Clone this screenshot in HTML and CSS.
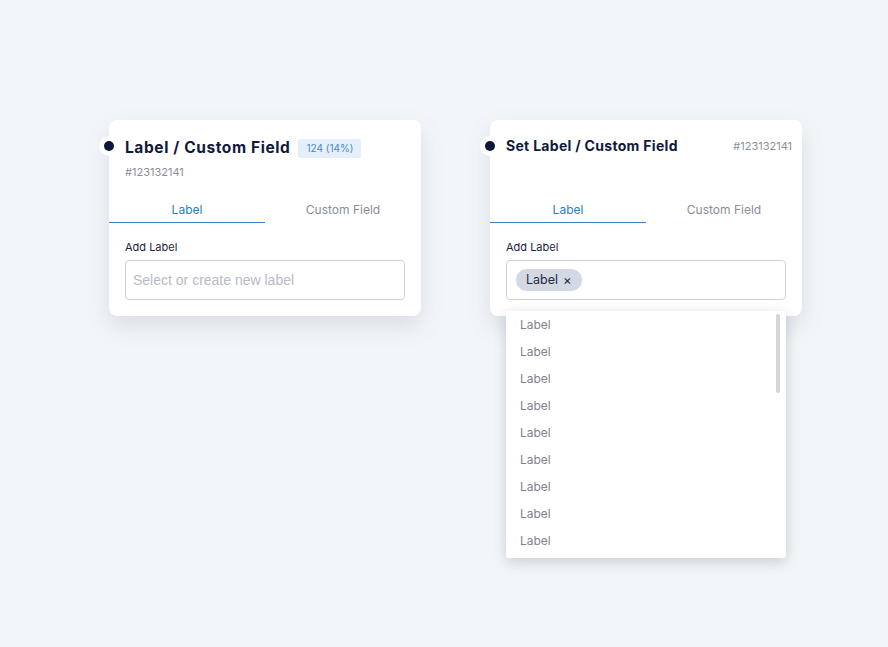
FILE: index.html
```html
<!DOCTYPE html>
<html lang="en">
<head>
<meta charset="utf-8">
<link rel="stylesheet" href="styles.css">
</head>
<body>
<div class="stage">
  <div class="card card-one">
    <span class="node-dot"></span>
    <div class="header">
      <div class="title-row">
        <h2 class="title">Label / Custom Field</h2>
        <span class="badge">124 (14%)</span>
      </div>
      <div class="id">#123132141</div>
    </div>
    <div class="tabs">
      <div class="tab active">Label</div>
      <div class="tab">Custom Field</div>
    </div>
    <div class="field">
      <div class="field-label">Add Label</div>
      <div class="input"><span class="placeholder">Select or create new label</span></div>
    </div>
  </div>

  <div class="card card-two">
    <span class="node-dot"></span>
    <div class="header header-two">
      <div class="title-row spread">
        <h2 class="title small">Set Label / Custom Field</h2>
        <span class="id">#123132141</span>
      </div>
    </div>
    <div class="tabs">
      <div class="tab active">Label</div>
      <div class="tab">Custom Field</div>
    </div>
    <div class="field">
      <div class="field-label">Add Label</div>
      <div class="input"><span class="chip">Label <span class="chip-x">×</span></span></div>
    </div>
    <div class="dropdown">
      <div class="scrollbar"></div>
      <div class="option">Label</div>
      <div class="option">Label</div>
      <div class="option">Label</div>
      <div class="option">Label</div>
      <div class="option">Label</div>
      <div class="option">Label</div>
      <div class="option">Label</div>
      <div class="option">Label</div>
      <div class="option">Label</div>
    </div>
  </div>
</div>
</body>
</html>
```

FILE: styles.css
```css
* { box-sizing: border-box; }
html, body { margin: 0; padding: 0; }
body {
  background: #f3f6f9;
  font-family: "Inter", "Noto Sans", sans-serif;
  width: 888px;
  height: 647px;
  overflow: hidden;
}
.stage {
  display: flex;
  gap: 69px;
  padding: 120px 0 0 109px;
  align-items: flex-start;
}
.card {
  position: relative;
  width: 312px;
  height: 196px;
  background: #fff;
  border-radius: 8px;
  box-shadow: 0 10px 24px rgba(40, 60, 100, 0.13);
}
.node-dot {
  position: absolute;
  left: -10px;
  top: 16px;
  width: 20px;
  height: 20px;
  border-radius: 50%;
  background: #fff;
}
.node-dot::after {
  content: "";
  position: absolute;
  left: 5px;
  top: 5px;
  width: 10px;
  height: 10px;
  border-radius: 50%;
  background: #0c1838;
}
.header {
  height: 78px;
  padding: 17px 16px 0 16px;
}
.header-two { padding-top: 16px; padding-right: 10px; }
.title-row {
  display: flex;
  align-items: center;
  gap: 8px;
}
.title-row.spread { justify-content: space-between; }
.title {
  margin: 0;
  font-size: 15.5px;
  line-height: 22px;
  font-weight: 700;
  color: #0f1a3c;
  letter-spacing: 0.6px;
}
.title.small { font-size: 14px; line-height: 20px; letter-spacing: 0.3px; }
.badge {
  background: #e4effb;
  color: #4a88d2;
  font-size: 10px;
  line-height: 19px;
  padding: 0 8px;
  border-radius: 2px;
}
.id {
  font-size: 11px;
  line-height: 16px;
  color: #8b8f98;
  margin-top: 5px;
}
.spread .id { margin-top: 0; }
.tabs {
  display: flex;
}
.tab {
  flex: 1;
  text-align: center;
  font-size: 12px;
  line-height: 18px;
  padding: 3px 0 2px;
  color: #8a8e97;
  border-bottom: 2px solid transparent;
}
.tab.active {
  color: #2f7bcc;
  border-bottom: 1px solid #3b80c6;
  padding-bottom: 3px;
}
.field {
  padding: 16px 16px 0;
}
.field-label {
  font-size: 11px;
  line-height: 16px;
  color: #1c2340;
  margin-bottom: 5px;
}
.input {
  height: 40px;
  border: 1px solid #cfd2d8;
  border-radius: 4px;
  display: flex;
  align-items: center;
  padding: 0 9px 0 7px;
}
.placeholder {
  font-family: "Liberation Sans", Arial, sans-serif;
  font-size: 14px;
  color: #b8bbc3;
}
.input .chip { margin-left: 2px; }
.chip {
  background: #d3d8e3;
  color: #1f2a44;
  font-size: 12.5px;
  line-height: 22px;
  padding: 0 10px;
  border-radius: 11px;
  display: inline-flex;
  align-items: center;
  gap: 5px;
}
.chip-x { font-size: 13px; }
.dropdown {
  position: absolute;
  left: 16px;
  top: 191px;
  width: 280px;
  height: 247px;
  background: #fff;
  border-radius: 3px;
  box-shadow: 0 4px 14px rgba(30, 45, 80, 0.2);
  padding-top: 0;
}
.scrollbar {
  position: absolute;
  right: 6px;
  top: 3px;
  width: 4px;
  height: 79px;
  background: #d6d6d6;
  border-radius: 2px;
}
.option {
  height: 27px;
  line-height: 27px;
  padding-left: 14px;
  font-size: 12px;
  color: #7f838e;
}
```
